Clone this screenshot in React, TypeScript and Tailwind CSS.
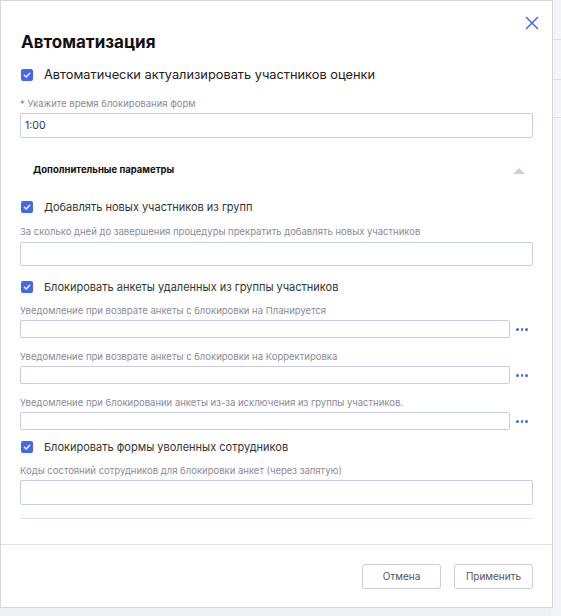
import React from "react";

const Check = () => (
  <span className="w-[12px] h-[12px] rounded-[2px] bg-[#4566f0] flex items-center justify-center shrink-0">
    <svg width="8" height="8" viewBox="0 0 8 8" fill="none">
      <path d="M1.3 4.2 L3.2 5.9 L6.7 2.2" stroke="white" strokeWidth="1.4" strokeLinecap="round" strokeLinejoin="round" />
    </svg>
  </span>
);

const Dots = () => (
  <span className="w-[22px] flex items-center justify-center gap-[2px]">
    <span className="w-[2.5px] h-[2.5px] rounded-full bg-[#4566f0]" />
    <span className="w-[2.5px] h-[2.5px] rounded-full bg-[#4566f0]" />
    <span className="w-[2.5px] h-[2.5px] rounded-full bg-[#4566f0]" />
  </span>
);

const Label = ({ children }: { children: React.ReactNode }) => (
  <div className="text-[9.5px] leading-[12px] text-[#8a8a96]">{children}</div>
);

export default function App() {
  return (
    <div className="w-[561px] h-[616px] bg-[#eef0f4] relative overflow-hidden" style={{ fontFamily: "Inter, 'Noto Sans', sans-serif" }}>
      <div className="absolute right-0 top-0 w-[10px] h-full bg-[#f3f4f7] flex flex-col">
        <div className="h-[40px] border-b border-[#dde0e8]" />
        <div className="h-[40px] border-b border-[#dde0e8]" />
        <div className="h-[38px] border-b border-[#dde0e8]" />
      </div>
      <div className="absolute left-0 top-0 w-[553px] h-[608px] bg-white border border-[#d6d6d6] flex flex-col">
        <div className="flex-1 flex flex-col px-[19px]">
          <div className="flex justify-end pt-[15px] h-[28px]">
            <svg width="14" height="14" viewBox="0 0 14 14" className="mr-[-6px]">
              <path d="M1.5 1.5 L12.5 12.5 M12.5 1.5 L1.5 12.5" stroke="#4a6bf0" strokeWidth="1.6" strokeLinecap="round" />
            </svg>
          </div>
          <div className="text-[17px] leading-[22px] font-bold text-[#111] pl-[1px] mt-[2px]">Автоматизация</div>
          <div className="flex items-center gap-[11px] mt-[14px] pl-[1px]">
            <Check />
            <span className="text-[12.8px] leading-[16px] text-[#222]">Автоматически актуализировать участников оценки</span>
          </div>
          <div className="mt-[15px]"><Label>* Укажите время блокирования форм</Label></div>
          <div className="mt-[3px] h-[25px] border border-[#c9cde0] rounded-[2px] flex items-center px-[4px] text-[10.5px] text-[#333]">1:00</div>

          <div className="mt-[25px] flex items-center justify-between pl-[13px] pr-[8px]">
            <span className="text-[9.5px] font-bold text-[#111]">Дополнительные параметры</span>
            <svg width="12" height="7" viewBox="0 0 12 7"><path d="M0 7 L6 1 L12 7 Z" fill="#c5d3ea" /></svg>
          </div>

          <div className="flex items-center gap-[11px] mt-[23px] pl-[1px]">
            <Check />
            <span className="text-[11px] leading-[14px] text-[#333]">Добавлять новых участников из групп</span>
          </div>
          <div className="mt-[12px]"><Label>За сколько дней до завершения процедуры прекратить добавлять новых участников</Label></div>
          <div className="mt-[4px] h-[24px] border border-[#c9cde0] rounded-[2px]" />

          <div className="flex items-center gap-[11px] mt-[14px] pl-[1px]">
            <Check />
            <span className="text-[11px] leading-[14px] text-[#333]">Блокировать анкеты удаленных из группы участников</span>
          </div>
          <div className="mt-[11px]"><Label>Уведомление при возврате анкеты с блокировки на Планируется</Label></div>
          <div className="mt-[3px] flex items-center gap-[1px]">
            <div className="flex-1 h-[18px] border border-[#c9cde0] rounded-[2px]" />
            <Dots />
          </div>
          <div className="mt-[13px]"><Label>Уведомление при возврате анкеты с блокировки на Корректировка</Label></div>
          <div className="mt-[3px] flex items-center gap-[1px]">
            <div className="flex-1 h-[18px] border border-[#c9cde0] rounded-[2px]" />
            <Dots />
          </div>
          <div className="mt-[13px]"><Label>Уведомление при блокировании анкеты из-за исключения из группы участников.</Label></div>
          <div className="mt-[3px] flex items-center gap-[1px]">
            <div className="flex-1 h-[18px] border border-[#c9cde0] rounded-[2px]" />
            <Dots />
          </div>

          <div className="flex items-center gap-[11px] mt-[10px] pl-[1px]">
            <Check />
            <span className="text-[11px] leading-[14px] text-[#333]">Блокировать формы уволенных сотрудников</span>
          </div>
          <div className="mt-[11px]"><Label>Коды состояний сотрудников для блокировки анкет (через запятую)</Label></div>
          <div className="mt-[3px] h-[25px] border border-[#c9cde0] rounded-[2px]" />
          <div className="mt-[13px] border-t border-[#dfe2ea]" />
        </div>
        <div className="h-[63px] border-t border-[#dfe2ea] flex items-start justify-end gap-[13px] pt-[19px] pr-[19px]">
          <button className="w-[79px] h-[25px] border border-[#c9cde0] rounded-[3px] text-[10px] text-[#555] bg-white">Отмена</button>
          <button className="w-[79px] h-[25px] border border-[#c9cde0] rounded-[3px] text-[10px] text-[#555] bg-white">Применить</button>
        </div>
      </div>
    </div>
  );
}
